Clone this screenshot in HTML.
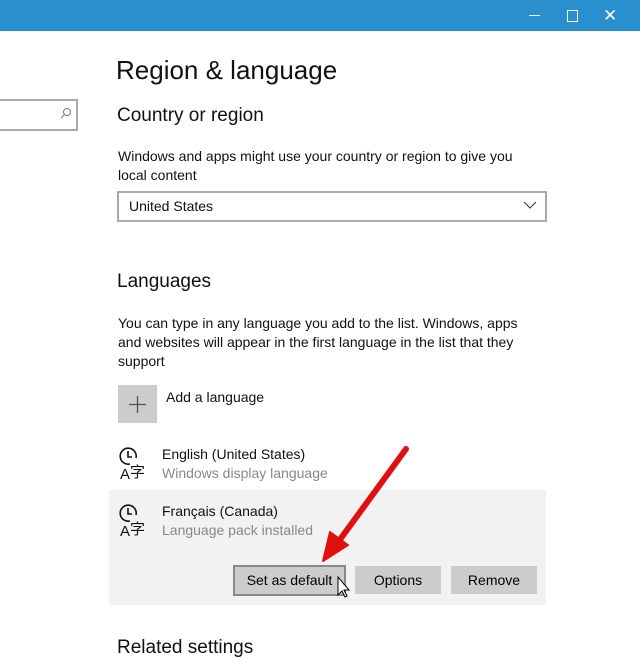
<!DOCTYPE html>
<html><head><style>
body{margin:0;width:640px;height:651px;overflow:hidden;background:#fff;font-family:"Liberation Sans",sans-serif;color:#000;position:relative}
.a{position:absolute;white-space:nowrap}
.t{font-size:14px;color:#111}
.btn{position:absolute;background:#ccc;font-size:14px;text-align:center;line-height:28px;height:28px}
</style></head><body>
<div class="a" style="left:0;top:0;width:640px;height:31px;background:#2a8fcd"></div>
<div class="a" style="left:529px;top:15px;width:11px;height:1px;background:#fff"></div>
<div class="a" style="left:567px;top:10px;width:9px;height:10px;border:1px solid #fff"></div>
<div class="a" style="left:603px;top:6px;color:#fff;font-size:17px">✕</div>
<div class="a" style="left:-2px;top:99px;width:78px;height:28px;border:2px solid #aaa;border-left:none"></div>
<svg class="a" style="left:60px;top:107px" width="12" height="12"><circle cx="7" cy="5" r="3.5" stroke="#777" fill="none"/><path d="M4.5 7.5 L1 11" stroke="#777"/></svg>
<div class="a" style="left:116px;top:55px;font-size:26px;color:#111">Region &amp; language</div>
<div class="a" style="left:117px;top:105px;font-size:19px;color:#111">Country or region</div>
<div class="a t" style="left:118px;top:147px;line-height:19px">Windows and apps might use your country or region to give you<br>local content</div>
<div class="a" style="left:117px;top:191px;width:426px;height:27px;border:2px solid #aaa"></div>
<div class="a t" style="left:129px;top:198px">United States</div>
<svg class="a" style="left:523px;top:201px" width="14" height="9"><path d="M1 1 L7 7 L13 1" stroke="#333" fill="none"/></svg>
<div class="a" style="left:117px;top:271px;font-size:19px;color:#111">Languages</div>
<div class="a t" style="left:118px;top:314px;line-height:19px">You can type in any language you add to the list. Windows, apps<br>and websites will appear in the first language in the list that they<br>support</div>
<div class="a" style="left:118px;top:385px;width:39px;height:38px;background:#ccc"></div>
<svg class="a" style="left:129px;top:396px" width="17" height="17"><path d="M8.5 0 V17 M0 8.5 H17" stroke="#555" stroke-width="1.3"/></svg>
<div class="a t" style="left:166px;top:389px">Add a language</div>
<div class="a" style="left:109px;top:490px;width:437px;height:115px;background:#f2f2f2"></div>
<svg class="a" style="left:119px;top:446px" width="36" height="34"><path d="M11 18 A8 8 0 1 1 17 12" stroke="#111" stroke-width="1.6" fill="none"/><path d="M9 5 V11 H13" stroke="#111" stroke-width="1.6" fill="none"/><text x="1" y="33" font-size="15" font-family="Liberation Sans" fill="#111">A</text><text x="11" y="31" font-size="15" font-family="Noto Sans CJK SC" fill="#111">字</text></svg>
<svg class="a" style="left:119px;top:503px" width="36" height="34"><path d="M11 18 A8 8 0 1 1 17 12" stroke="#111" stroke-width="1.6" fill="none"/><path d="M9 5 V11 H13" stroke="#111" stroke-width="1.6" fill="none"/><text x="1" y="33" font-size="15" font-family="Liberation Sans" fill="#111">A</text><text x="11" y="31" font-size="15" font-family="Noto Sans CJK SC" fill="#111">字</text></svg>
<div class="a t" style="left:162px;top:446px">English (United States)</div>
<div class="a t" style="left:162px;top:465px;color:#888">Windows display language</div>
<div class="a t" style="left:162px;top:503px">Français (Canada)</div>
<div class="a t" style="left:162px;top:522px;color:#888">Language pack installed</div>
<div class="btn" style="left:233px;top:565px;width:109px;border:2px solid #888;height:27px;line-height:27px">Set as default</div>
<div class="btn" style="left:355px;top:566px;width:86px">Options</div>
<div class="btn" style="left:451px;top:566px;width:86px">Remove</div>
<svg class="a" style="left:0;top:0" width="640" height="651"><path d="M406 449 L336 545" stroke="#e01010" stroke-width="6" stroke-linecap="round"/><path d="M323 561 L330 532 L348 545 Z" fill="#e01010" stroke="#e01010" stroke-width="2" stroke-linejoin="round"/>
<path d="M338 577 L338 595 L342 591 L345 597 L347 596 L344 590 L349 590 Z" fill="#fff" stroke="#000" stroke-width="1"/></svg>
<div class="a" style="left:117px;top:637px;font-size:19px;color:#111">Related settings</div>
</body></html>
